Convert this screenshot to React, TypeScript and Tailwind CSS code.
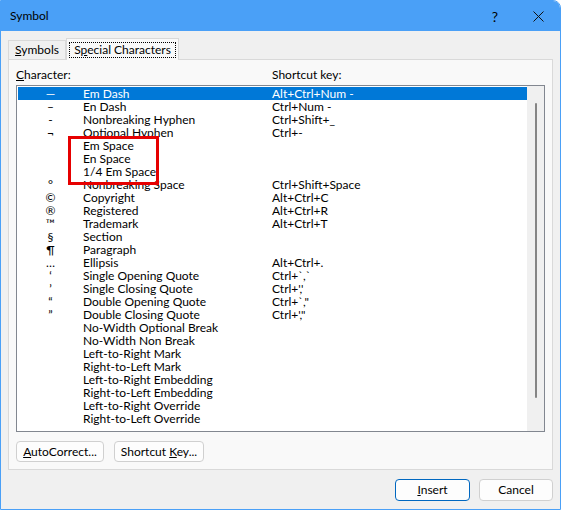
import React from 'react';

type Row = { sym: string; name: string; key: string };

const rows: Row[] = [
  { sym: '—', name: 'Em Dash', key: 'Alt+Ctrl+Num -' },
  { sym: '–', name: 'En Dash', key: 'Ctrl+Num -' },
  { sym: '-', name: 'Nonbreaking Hyphen', key: 'Ctrl+Shift+_' },
  { sym: '¬', name: 'Optional Hyphen', key: 'Ctrl+-' },
  { sym: '', name: 'Em Space', key: '' },
  { sym: '', name: 'En Space', key: '' },
  { sym: '', name: '1/4 Em Space', key: '' },
  { sym: '°', name: 'Nonbreaking Space', key: 'Ctrl+Shift+Space' },
  { sym: '©', name: 'Copyright', key: 'Alt+Ctrl+C' },
  { sym: '®', name: 'Registered', key: 'Alt+Ctrl+R' },
  { sym: '™', name: 'Trademark', key: 'Alt+Ctrl+T' },
  { sym: '§', name: 'Section', key: '' },
  { sym: '¶', name: 'Paragraph', key: '' },
  { sym: '…', name: 'Ellipsis', key: 'Alt+Ctrl+.' },
  { sym: '‘', name: 'Single Opening Quote', key: 'Ctrl+`,`' },
  { sym: '’', name: 'Single Closing Quote', key: "Ctrl+','" },
  { sym: '“', name: 'Double Opening Quote', key: 'Ctrl+`,"' },
  { sym: '”', name: 'Double Closing Quote', key: "Ctrl+',\"" },
  { sym: '', name: 'No-Width Optional Break', key: '' },
  { sym: '', name: 'No-Width Non Break', key: '' },
  { sym: '', name: 'Left-to-Right Mark', key: '' },
  { sym: '', name: 'Right-to-Left Mark', key: '' },
  { sym: '', name: 'Left-to-Right Embedding', key: '' },
  { sym: '', name: 'Right-to-Left Embedding', key: '' },
  { sym: '', name: 'Left-to-Right Override', key: '' },
  { sym: '', name: 'Right-to-Left Override', key: '' },
];

export default function App() {
  return (
    <div className="relative w-[561px] h-[510px] flex flex-col bg-[#f0f0f0] border border-[#4aa0f7] rounded-tr-[8px] overflow-hidden text-[12px] text-black [font-family:Lato,sans-serif]">
      {/* Title bar */}
      <div className="h-[30px] shrink-0 bg-[#4aa0f7] flex items-center pl-[9px]">
        <span className="flex-1">Symbol</span>
        <span className="w-[20px] text-center text-[14px] mr-[28px]">?</span>
        <svg className="w-[11px] h-[11px] mr-[16px]" viewBox="0 0 11 11" fill="none" stroke="#111" strokeWidth="1">
          <path d="M0.5 0.5 L10.5 10.5 M10.5 0.5 L0.5 10.5" />
        </svg>
      </div>

      {/* Body */}
      <div className="flex-1 flex flex-col px-[7px]">
        {/* Tabs */}
        <div className="mt-[6px] h-[22px] flex items-end">
          <div className="w-[58px] h-[19px] border border-b-0 border-[#d9d9d9] flex items-center justify-center">
            <span><span className="underline">S</span>ymbols</span>
          </div>
          <div className="w-[113px] h-[22px] border border-b-0 border-[#d9d9d9] bg-[#f9f9f9] -mb-px relative z-10 flex items-center justify-center">
            <span className="px-[4px] leading-[14px] border border-dotted border-black">
              S<span className="underline">p</span>ecial Characters
            </span>
          </div>
        </div>

        {/* Panel */}
        <div className="h-[411px] border border-[#d9d9d9] bg-[#f9f9f9] flex flex-col px-[7px] pt-[8px]">
          <div className="h-[13px] leading-[13px] grid grid-cols-[256px_1fr]">
            <span><span className="underline">C</span>haracter:</span>
            <span>Shortcut key:</span>
          </div>

          <div className="mt-[4px] h-[347px] border border-[#828790] bg-white flex">
            <div className="flex-1 pl-[1px] pt-[1px]">
              {rows.map((r, i) => (
                <div
                  key={r.name}
                  className={
                    'h-[13px] leading-[13px] flex whitespace-nowrap ' +
                    (i === 0 ? 'bg-[#0078d7] text-white' : '')
                  }
                >
                  <span className="w-[65px] text-center">{r.sym}</span>
                  <span className="w-[189px]">{r.name}</span>
                  <span>{r.key}</span>
                </div>
              ))}
            </div>
            <div className="w-[17px] bg-[#f0f0f0] flex justify-center pt-[17px] pb-[33px]">
              <div className="w-[2px] h-full bg-[#858585] rounded-full" />
            </div>
          </div>

          <div className="mt-[9px] flex gap-[10px]">
            <button className="w-[88px] h-[21px] border border-[#d0d0d0] rounded-[4px] bg-[#fdfdfd]">
              <span className="underline">A</span>utoCorrect...
            </button>
            <button className="w-[90px] h-[21px] border border-[#d0d0d0] rounded-[4px] bg-[#fdfdfd]">
              Shortcut <span className="underline">K</span>ey...
            </button>
          </div>
        </div>

        {/* Dialog buttons */}
        <div className="mt-[9px] flex justify-end gap-[9px]">
          <button className="w-[75px] h-[22px] border border-[#0067c0] rounded-[4px] bg-[#fdfdfd]">
            <span className="underline">I</span>nsert
          </button>
          <button className="w-[74px] h-[22px] border border-[#d0d0d0] rounded-[4px] bg-[#fdfdfd]">
            Cancel
          </button>
        </div>
      </div>

      {/* annotation box */}
      <div className="absolute left-[67px] top-[135px] w-[91px] h-[49px] border-[3px] border-[#e60000]" />
    </div>
  );
}
